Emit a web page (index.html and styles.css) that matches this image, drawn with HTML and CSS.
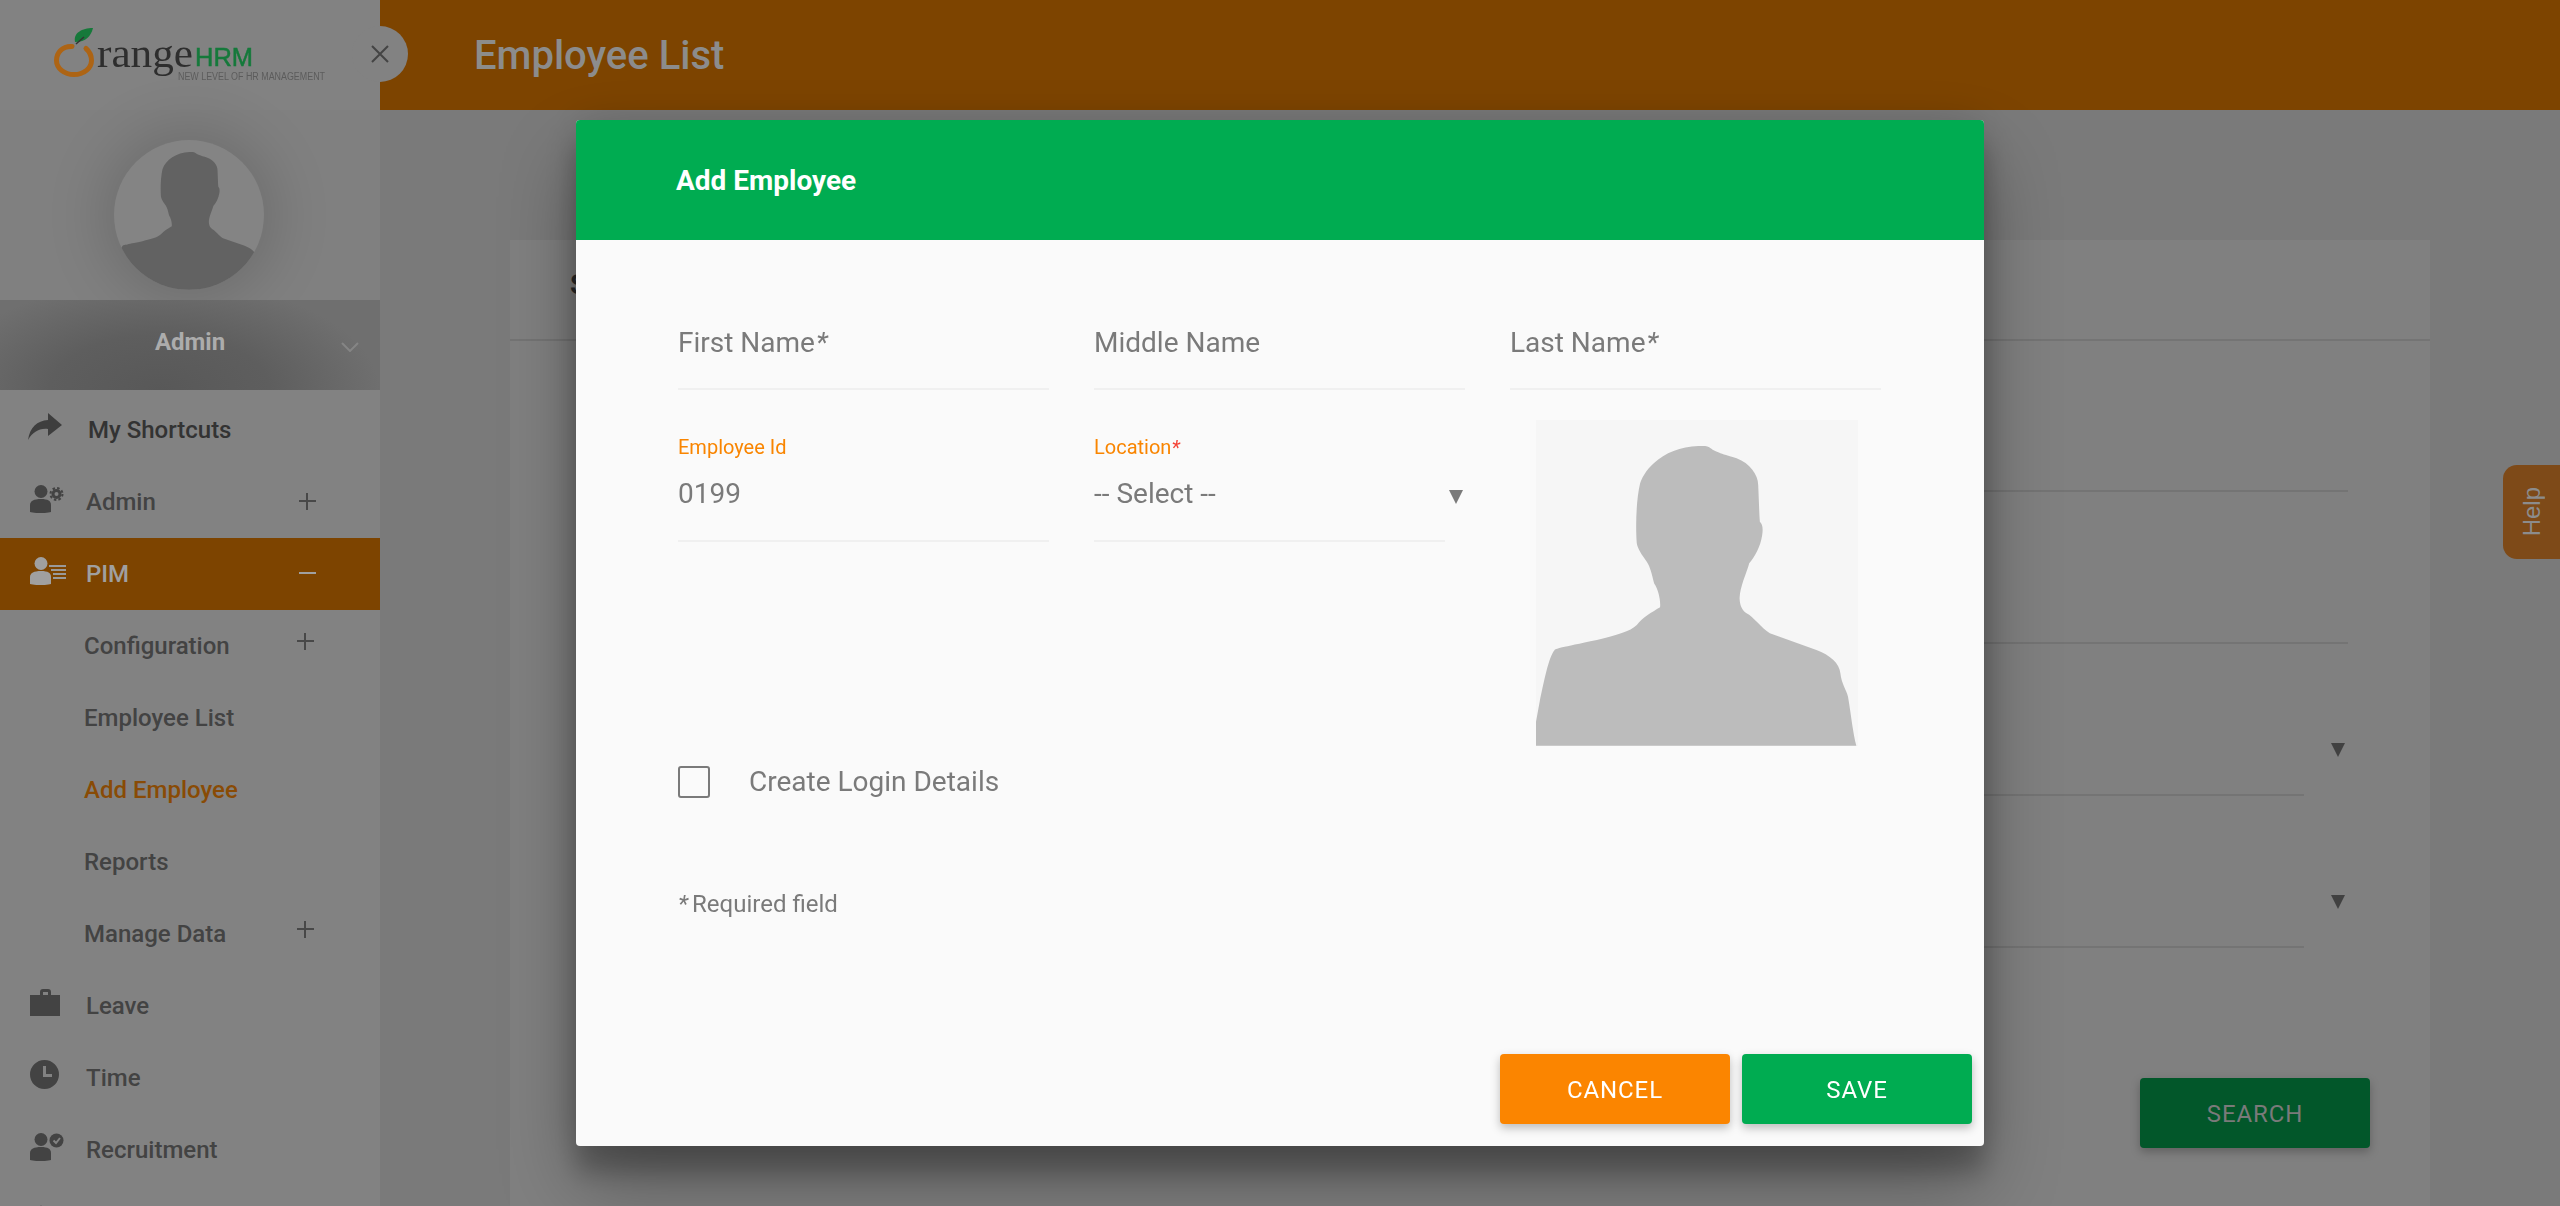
FILE: index.html
```html
<!DOCTYPE html>
<html lang="en">
<head>
  <meta charset="UTF-8">
  <title>Employee List</title>
  <link rel="stylesheet" href="styles.css">
</head>
<body>
  <svg class="defs" width="0" height="0">
    <symbol id="person" viewBox="287 60 968 978" preserveAspectRatio="none">
      <path d="M287 1037 V965 L298 905 C310 850 325 770 343 750 C345 746 360 743 470 720 C530 705 570 695 590 675 C610 650 630 640 660 622 C662 600 655 570 642 550 C635 520 630 500 620 485 C605 465 592 445 590 430 C586 380 588 300 600 250 C620 190 690 140 775 138 C790 138 805 136 812 145 C825 155 840 160 890 175 C930 190 955 225 955 255 C957 300 958 340 960 365 C968 372 970 385 967 405 C962 440 945 470 928 490 C920 520 900 560 899 595 C900 620 908 632 920 640 C940 650 965 685 990 700 L1130 750 C1170 765 1200 790 1202 820 C1205 850 1220 870 1225 890 C1235 950 1240 1000 1250 1037 Z"/>
    </symbol>
    <symbol id="user" viewBox="0 0 22 28">
      <circle cx="11" cy="6.5" r="6.5"/>
      <path d="M0 27 V20 C0 16 4 14 11 14 C18 14 21 16 21 20 V27 C17 28.500 4 28.500 0 27 Z"/>
    </symbol>
  </svg>

  <div class="layout">
    <aside class="sidebar">
      <div class="logo-bar">
        <svg class="logo" width="380" height="110" viewBox="0 0 380 110">
          <path d="M72 46.500 C62 46 56.500 53 56.500 60.500 C56.500 68 64 74.500 74 74.500 C84 74.500 91.500 68 91.500 60.500 C91.500 56 90 52 86 48.500" fill="none" stroke="#ad6414" stroke-width="5" stroke-linecap="round"/>
          <path d="M75 42 C73 33 82 28 93 28 C91 36 86 42 75 42 Z" fill="#16793a"/>
          <path d="M76 44 L84 37" stroke="#333" stroke-width="1.500" fill="none"/>
          <text class="logo-orange" x="97" y="67" textLength="96" lengthAdjust="spacingAndGlyphs">range</text>
          <text class="logo-hrm" x="195" y="66" textLength="58" lengthAdjust="spacingAndGlyphs">HRM</text>
          <text class="logo-tag" x="178" y="80" textLength="147" lengthAdjust="spacingAndGlyphs">NEW LEVEL OF HR MANAGEMENT</text>
        </svg>
        <button class="close-nav" type="button">
          <svg width="18" height="18" viewBox="0 0 18 18"><path d="M1 1 L17 17 M17 1 L1 17"/></svg>
        </button>
      </div>

      <div class="profile">
        <div class="avatar">
          <svg width="150" height="150"><use href="#person"/></svg>
        </div>
      </div>
      <div class="user-band">
        <span>Admin</span>
        <svg class="chevron" width="18" height="10" viewBox="0 0 18 10"><path d="M1 1 L9 9 L17 1"/></svg>
      </div>

      <nav class="menu">
        <a class="menu-item strong">
          <svg class="ico shortcut-ico" width="34" height="28" viewBox="0 0 34 28"><path d="M0 27 C2 14 9 8 20 7 V0 L34 12 L20 23 V16 C11 15 5 19 0 27 Z"/></svg>
          <span class="shortcut-label">My Shortcuts</span>
        </a>
        <a class="menu-item">
          <svg class="ico" width="34" height="28" viewBox="0 0 34 28">
            <use href="#user" width="22" height="28"/>
            <circle cx="26.500" cy="9" r="3.500" fill="none" stroke="#434343" stroke-width="3"/>
            <circle cx="26.500" cy="9" r="6" fill="none" stroke="#434343" stroke-width="2" stroke-dasharray="2.500 2.200"/>
          </svg>
          <span>Admin</span><i class="plus"></i>
        </a>
        <a class="menu-item active">
          <svg class="ico pim-ico" width="36" height="28" viewBox="0 0 36 28">
            <use href="#user" width="22" height="28"/>
            <path d="M19 9 H36 M21 13 H36 M23 17 H36 M23 21 H36" stroke="#9a9a9a" stroke-width="2"/>
          </svg>
          <span>PIM</span><i class="minus"></i>
        </a>
        <a class="menu-item sub"><span>Configuration</span><i class="plus"></i></a>
        <a class="menu-item sub"><span>Employee List</span></a>
        <a class="menu-item sub current"><span>Add Employee</span></a>
        <a class="menu-item sub"><span>Reports</span></a>
        <a class="menu-item sub"><span>Manage Data</span><i class="plus"></i></a>
        <a class="menu-item">
          <svg class="ico" width="34" height="28" viewBox="0 0 34 28"><path d="M10 6 V3 C10 1 11 0 13 0 H18 C20 0 21 1 21 3 V6 H30 V27 H0 V6 Z M13 6 H18 V3 H13 Z" fill-rule="evenodd"/></svg>
          <span>Leave</span>
        </a>
        <a class="menu-item">
          <svg class="ico" width="34" height="30" viewBox="0 0 34 30"><path d="M14.500 0 A14.500 14.500 0 1 1 14.500 29 A14.500 14.500 0 1 1 14.500 0 Z M13 6 V17 H22 V14 H16 V6 Z" fill-rule="evenodd"/></svg>
          <span>Time</span>
        </a>
        <a class="menu-item">
          <svg class="ico" width="34" height="28" viewBox="0 0 34 28">
            <use href="#user" width="22" height="28"/>
            <circle cx="26.500" cy="7.500" r="7"/>
            <path d="M23.500 7.500 L26 10 L30 5" stroke="#838383" stroke-width="2" fill="none"/>
          </svg>
          <span>Recruitment</span>
        </a>
        <a class="menu-item">
          <svg class="ico" width="34" height="28" viewBox="0 0 34 28"><path d="M11 0 L14 8 H8 Z"/></svg>
        </a>
      </nav>
    </aside>

    <main class="main">
      <header class="topbar"><h1>Employee List</h1></header>
      <section class="panel">
        <div class="panel-head"><h2>Search</h2></div>
        <div class="panel-body">
          <div class="bg-line"></div>
          <div class="bg-line"></div>
          <div class="bg-line short"><b></b></div>
          <div class="bg-line short"><b></b></div>
          <div class="panel-actions"><button class="bg-search" type="button">SEARCH</button></div>
        </div>
      </section>
    </main>
  </div>

  <div class="help-tab"><span>Help</span></div>

  <div class="dialog-wrap">
    <div class="dialog">
      <div class="dialog-head">Add Employee</div>
      <div class="dialog-body">
        <div class="form-grid">
          <div class="field"><span class="ph">First Name<i>*</i></span></div>
          <div class="field"><span class="ph">Middle Name</span></div>
          <div class="field"><span class="ph">Last Name<i>*</i></span></div>

          <div class="field labelled">
            <label>Employee Id</label>
            <span class="ph">0199</span>
          </div>
          <div class="field labelled narrow">
            <label>Location<em>*</em></label>
            <span class="ph">-- Select --</span>
            <b class="caret"></b>
          </div>
          <div class="photo">
            <svg width="322" height="326"><use href="#person"/></svg>
          </div>
        </div>

        <div class="login-row">
          <span class="check"></span>
          <span class="login-label">Create Login Details</span>
        </div>
        <p class="req"><i>*</i>Required field</p>
      </div>
      <div class="dialog-actions">
        <button class="btn btn-cancel" type="button">CANCEL</button>
        <button class="btn btn-save" type="button">SAVE</button>
      </div>
    </div>
  </div>
</body>
</html>
```

FILE: styles.css
```css
* {
  box-sizing: border-box;
}
html, body {
  margin: 0;
  height: 100%;
  overflow: hidden;
}
body {
  background: #7a7a7a;
  font-family: Roboto, "Liberation Sans", sans-serif;
  color: #444;
}
.defs {
  position: absolute;
}
.layout {
  display: flex;
  height: 100%;
}

/* sidebar */
.sidebar {
  width: 380px;
  flex: none;
  height: 100%;
  background: #828282;
}
.logo-bar {
  height: 110px;
  position: relative;
  z-index: 2;
}
.logo {
  display: block;
}
.logo-orange {
  font: 40px "Liberation Serif", serif;
  fill: #2e2e2e;
}
.logo-hrm {
  font: 25px "Liberation Sans", sans-serif;
  fill: #15793b;
  stroke: #15793b;
  stroke-width: .5px;
}
.logo-tag {
  font: 10px "Liberation Sans", sans-serif;
  fill: #5c5c5c;
}
.close-nav {
  position: absolute;
  left: 352px;
  top: 26px;
  width: 56px;
  height: 56px;
  border: 0;
  border-radius: 50%;
  background: #828282;
  padding: 0;
  display: flex;
  align-items: center;
  justify-content: center;
}
.close-nav path {
  stroke: #444;
  stroke-width: 2;
  fill: none;
}
.profile {
  height: 190px;
  padding: 30px 0 0 114px;
  background: #808080;
}
.avatar {
  width: 150px;
  height: 150px;
  border-radius: 50%;
  overflow: hidden;
  background: #848484;
  fill: #626262;
  box-shadow: 0 0 60px 10px rgba(0, 0, 0, .16);
}
.avatar svg {
  display: block;
}
.user-band {
  height: 90px;
  position: relative;
  background: radial-gradient(ellipse 220px 110px at 42% 100%, #585858, #5e5e5e 50%, #6f6f6f);
  color: #acacac;
  font-size: 24px;
  font-weight: 700;
  text-align: center;
  line-height: 84px;
}
.chevron {
  position: absolute;
  left: 341px;
  top: 42px;
}
.chevron path {
  fill: none;
  stroke: #858585;
  stroke-width: 2;
}
.menu {
  padding-top: 4px;
}
.menu-item {
  height: 72px;
  display: flex;
  align-items: center;
  position: relative;
  padding-left: 30px;
  font-size: 24px;
  font-weight: 500;
  color: #434343;
  fill: #434343;
}
.menu-item .ico {
  flex: none;
  margin: -6px 22px 0 0;
}
.menu-item .shortcut-ico {
  margin-left: -2px;
}
.menu-item .pim-ico {
  margin-right: 20px;
}
.shortcut-label {
  margin-left: 4px;
}
.menu-item.strong {
  color: #333;
  fill: #3e3e3e;
}
.menu-item.active {
  background: #7d4400;
  color: #a0a0a0;
  fill: #a0a0a0;
}
.menu-item.sub {
  padding-left: 84px;
}
.menu-item.current {
  color: #894b05;
}
.plus, .minus {
  position: absolute;
  left: 299px;
  top: 27px;
  width: 17px;
  height: 17px;
}
.sub .plus {
  left: 297px;
  top: 23px;
}
.plus::before, .plus::after, .minus::before {
  content: "";
  position: absolute;
  background: #484848;
}
.plus::before, .minus::before {
  left: 0;
  top: 7px;
  width: 17px;
  height: 2px;
}
.plus::after {
  left: 7px;
  top: 0;
  width: 2px;
  height: 17px;
}
.minus::before {
  background: #a0a0a0;
}

/* page behind the dialog */
.main {
  flex: 1;
  min-width: 0;
}
.topbar {
  height: 110px;
  background: #7d4400;
  padding-left: 94px;
  display: flex;
  align-items: center;
}
.topbar h1 {
  margin: 0;
  font-size: 40px;
  font-weight: 500;
  color: #8c8c8c;
}
.panel {
  width: 1920px;
  margin: 130px 0 0 130px;
  height: 966px;
  background: #808080;
}
.panel-head {
  height: 101px;
  padding-left: 60px;
  border-bottom: 2px solid #747474;
}
.panel-head h2 {
  margin: 0;
  font-size: 28px;
  line-height: 90px;
  color: #2a2a2a;
}
.panel-body {
  padding: 0 82px 0 70px;
}
.bg-line {
  height: 2px;
  margin-top: 149px;
  background: #747474;
  position: relative;
}
.bg-line + .bg-line {
  margin-top: 150px;
}
.bg-line.short {
  margin-right: 44px;
}
.bg-line b {
  position: absolute;
  right: -41px;
  top: -51px;
  width: 0;
  height: 0;
  border-left: 7.500px solid transparent;
  border-right: 7.500px solid transparent;
  border-top: 14px solid #414141;
}
.panel-actions {
  display: flex;
  justify-content: flex-end;
  margin: 130px -22px 0 0;
}
.bg-search {
  width: 230px;
  height: 70px;
  padding-top: 2px;
  border: 0;
  border-radius: 4px;
  background: #02572a;
  color: #7a7a7a;
  font: 400 24px Roboto, sans-serif;
  letter-spacing: .9px;
  box-shadow: 0 4px 10px rgba(0, 0, 0, .25);
}
.help-tab {
  position: absolute;
  right: 0;
  top: 465px;
  width: 57px;
  height: 94px;
  background: #7e4a18;
  border-radius: 14px 0 0 14px;
  display: flex;
  align-items: center;
  justify-content: center;
}
.help-tab span {
  writing-mode: vertical-rl;
  transform: rotate(180deg);
  font: 24px "Liberation Sans", sans-serif;
  color: #8c8c8c;
}

/* dialog */
.dialog-wrap {
  position: fixed;
  inset: 0;
  display: flex;
  justify-content: center;
  padding-top: 120px;
}
.dialog {
  width: 1408px;
  height: 1026px;
  display: flex;
  flex-direction: column;
  background: #fafafa;
  border-radius: 4px;
  box-shadow: 0 27px 24px 0 rgba(0, 0, 0, .2), 0 40px 77px 0 rgba(0, 0, 0, .3), 0 0 40px rgba(0, 0, 0, .12);
}
.dialog-head {
  height: 120px;
  flex: none;
  padding-left: 100px;
  background: #00ac51;
  border-radius: 4px 4px 0 0;
  color: #fff;
  font-size: 28px;
  font-weight: 700;
  line-height: 121px;
}
.dialog-body {
  flex: 1;
  padding: 82px 103px 0 102px;
  color: #7a7a7a;
}
.form-grid {
  display: grid;
  grid-template-columns: repeat(3, 371px);
  column-gap: 45px;
  row-gap: 30px;
  align-items: start;
}
.field {
  position: relative;
  border-bottom: 2px solid #f0f0f0;
  padding: 1px 0 25px;
  font-size: 28px;
  line-height: 40px;
}
.field i {
  margin-left: 1px;
}
.labelled {
  margin-top: 13px;
  padding-top: 0;
  padding-bottom: 26px;
}
.labelled label {
  display: block;
  font-size: 20px;
  line-height: 28px;
  color: #f98500;
  margin-bottom: 13px;
}
.labelled em {
  color: #f44336;
}
.narrow {
  width: 351px;
}
.caret {
  position: absolute;
  right: -18px;
  top: 57px;
  width: 0;
  height: 0;
  border-left: 7.500px solid transparent;
  border-right: 7.500px solid transparent;
  border-top: 14px solid #7a7a7a;
}
.photo {
  width: 322px;
  height: 326px;
  margin-left: 26px;
  background: #f6f6f6;
  fill: #bcbcbc;
}
.photo svg {
  display: block;
}
.login-row {
  display: flex;
  align-items: center;
  gap: 39px;
  margin-top: 20px;
  height: 32px;
  font-size: 28px;
}
.login-label {
  padding-bottom: 2px;
}
.check {
  width: 32px;
  height: 32px;
  border: 2px solid #7a7a7a;
  border-radius: 3px;
}
.req {
  margin: 91px 0 0;
  font-size: 24px;
  line-height: 30px;
}
.req i {
  margin-right: 4px;
}
.dialog-actions {
  display: flex;
  justify-content: flex-end;
  gap: 12px;
  padding: 0 12px 22px;
}
.btn {
  width: 230px;
  height: 70px;
  padding-top: 2px;
  border: 0;
  border-radius: 4px;
  color: #fff;
  font: 400 24px Roboto, sans-serif;
  letter-spacing: .9px;
  box-shadow: 0 4px 10px rgba(0, 0, 0, .25);
}
.btn-cancel {
  background: #fb8500;
}
.btn-save {
  background: #00ac51;
}
```
